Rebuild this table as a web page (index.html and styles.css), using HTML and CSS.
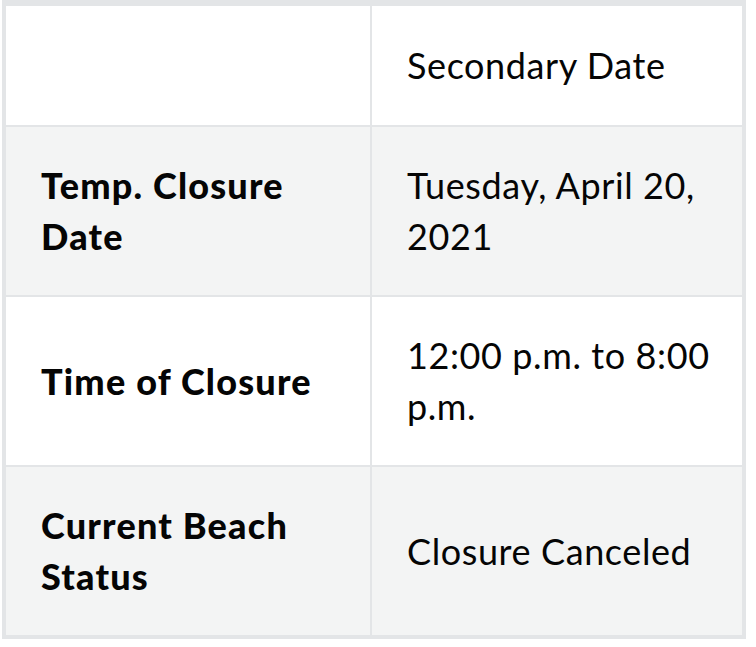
FILE: index.html
```html
<!DOCTYPE html>
<html lang="en">
<head>
<meta charset="utf-8">
<title>Beach Closure</title>
<link rel="stylesheet" href="styles.css">
</head>
<body>
<div class="wrap">
<table class="closure">
  <thead>
    <tr class="row row-white head">
      <td class="label"></td>
      <th class="value">Secondary Date</th>
    </tr>
  </thead>
  <tbody>
    <tr class="row row-grey">
      <th class="label">Temp. Closure Date</th>
      <td class="value">Tuesday, April 20, 2021</td>
    </tr>
    <tr class="row row-white">
      <th class="label">Time of Closure</th>
      <td class="value">12:00 p.m. to 8:00 p.m.</td>
    </tr>
    <tr class="row row-grey last">
      <th class="label">Current Beach Status</th>
      <td class="value">Closure Canceled</td>
    </tr>
  </tbody>
</table>
</div>
</body>
</html>
```

FILE: styles.css
```css
html, body {
  margin: 0;
  padding: 0;
  background: #ffffff;
}

.wrap {
  padding: 0 10px 0 2px;
}

.closure {
  width: 744px;
  border-collapse: separate;
  border-spacing: 0;
  border: 4px solid #e3e5e7;
  border-top-width: 6px;
  font-family: Lato, "Source Sans Pro", "Open Sans", sans-serif;
  font-size: 36px;
  line-height: 51px;
  color: #050505;
  table-layout: fixed;
}

.closure td,
.closure th {
  padding: 33px 35px;
  text-align: left;
  vertical-align: middle;
  border-bottom: 2px solid #e3e5e7;
}

.closure .label {
  width: 294px;
  border-right: 2px solid #e3e5e7;
  font-weight: 900;
  letter-spacing: 1.2px;
}

.closure .value {
  font-weight: 400;
  letter-spacing: 0.6px;
  padding-right: 28px;
}

.closure .head td,
.closure .head th {
  padding-top: 34px;
  padding-bottom: 34px;
}

.closure .last td,
.closure .last th {
  border-bottom: 0;
}

.row-white {
  background: #ffffff;
}

.row-grey {
  background: #f3f4f4;
}
```
